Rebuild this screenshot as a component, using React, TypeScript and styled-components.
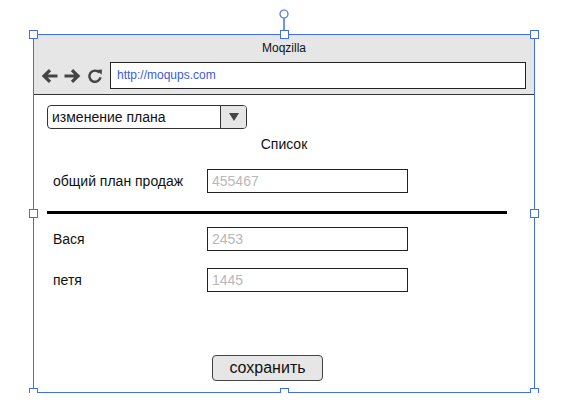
import React from 'react';
import styled, { createGlobalStyle } from 'styled-components';

const GlobalStyle = createGlobalStyle`
  body {
    margin: 0;
    background: #fff;
    font-family: 'Liberation Sans', Arial, sans-serif;
    color: #111;
  }
`;

const Stage = styled.div`
  padding: 34px 0 0 33px;
`;

const Frame = styled.div`
  position: relative;
  box-sizing: border-box;
  width: 502px;
  height: 359px;
  border: 1px solid #4170e6;
  display: flex;
  flex-direction: column;
`;

const Handle = styled.div<{ $x: 'l' | 'c' | 'r'; $y: 't' | 'm' | 'b' }>`
  position: absolute;
  box-sizing: border-box;
  width: 9px;
  height: 9px;
  background: #fff;
  border: 1px solid #4170e6;
  ${(p) => (p.$x === 'l' ? 'left: -5px;' : p.$x === 'r' ? 'right: -5px;' : 'left: 246px;')}
  ${(p) => (p.$y === 't' ? 'top: -5px;' : p.$y === 'b' ? 'bottom: -5px;' : 'top: 174px;')}
`;

const Rotator = styled.svg`
  position: absolute;
  left: 244px;
  top: -26px;
`;

const Header = styled.div`
  background: #e6e6e6;
  border-bottom: 1px solid #333;
  padding-bottom: 5px;
`;

const Title = styled.div`
  height: 27px;
  line-height: 27px;
  text-align: center;
  font-size: 12px;
  color: #111;
`;

const Toolbar = styled.div`
  display: flex;
  align-items: center;
  padding-left: 7px;
  height: 27px;
`;

const NavIcon = styled.svg`
  display: block;
  margin-right: 6px;
  flex: none;
`;

const UrlBox = styled.div`
  box-sizing: border-box;
  margin-left: 1px;
  width: 416px;
  height: 27px;
  background: #fff;
  border: 1px solid #222;
  font-size: 12px;
  line-height: 25px;
  padding-left: 6px;
  color: #3b5bdb;
`;

const Content = styled.div`
  flex: 1;
  display: flex;
  flex-direction: column;
  padding: 10px 13px 11px;
`;

const Select = styled.div`
  box-sizing: border-box;
  width: 200px;
  height: 24px;
  border: 1px solid #333;
  border-radius: 4px;
  display: flex;
  overflow: hidden;
  font-size: 14px;
`;

const SelectText = styled.div`
  flex: 1;
  line-height: 22px;
  padding-left: 4px;
`;

const SelectArrow = styled.div`
  width: 25px;
  background: #e6e6e6;
  border-left: 1px solid #333;
  display: flex;
  align-items: center;
  justify-content: center;
  &::after {
    content: '';
    border-left: 5px solid transparent;
    border-right: 5px solid transparent;
    border-top: 8px solid #444;
  }
`;

const Caption = styled.div`
  margin-top: 7px;
  text-align: center;
  font-size: 14px;
  line-height: 17px;
`;

const Row = styled.div<{ $gap: number }>`
  display: grid;
  grid-template-columns: 160px 201px;
  align-items: center;
  margin-top: ${(p) => p.$gap}px;
`;

const Label = styled.div`
  padding-left: 6px;
  font-size: 14px;
`;

const Field = styled.div`
  box-sizing: border-box;
  height: 24px;
  border: 1px solid #222;
  font-size: 14px;
  line-height: 22px;
  padding-left: 4px;
  color: #b8b8b8;
`;

const Divider = styled.div`
  width: 460px;
  height: 3px;
  background: #000;
  margin-top: 18px;
`;

const Footer = styled.div`
  margin-top: auto;
  display: flex;
  padding-left: 165px;
`;

const Button = styled.div`
  box-sizing: border-box;
  width: 111px;
  height: 26px;
  border: 1px solid #444;
  border-radius: 4px;
  background: #e6e6e6;
  font-size: 16px;
  line-height: 24px;
  text-align: center;
`;

const rows = [
  { label: 'Вася', value: '2453', gap: 13 },
  { label: 'петя', value: '1445', gap: 17 },
];

const App = () => (
  <>
    <GlobalStyle />
    <Stage>
      <Frame>
        <Header>
          <Title>Moqzilla</Title>
          <Toolbar>
            <NavIcon width="17" height="16" viewBox="0 0 17 16">
              <path d="M16.5 8H3.5M9 2.2L3 8l6 5.8" fill="none" stroke="#444" strokeWidth="3.2" />
            </NavIcon>
            <NavIcon width="17" height="16" viewBox="0 0 17 16">
              <path d="M0.5 8h13M8 2.2l6 5.8-6 5.8" fill="none" stroke="#444" strokeWidth="3.2" />
            </NavIcon>
            <NavIcon width="16" height="16" viewBox="0 0 16 16">
              <path d="M12.3 4.6A5.6 5.6 0 1 0 13.5 9.3" fill="none" stroke="#444" strokeWidth="2.4" />
              <path d="M9.6 2L15 1.4 14.6 6.8z" fill="#444" />
            </NavIcon>
            <UrlBox>http://moqups.com</UrlBox>
          </Toolbar>
        </Header>
        <Content>
          <Select>
            <SelectText>изменение плана</SelectText>
            <SelectArrow />
          </Select>
          <Caption>Список</Caption>
          <Row $gap={16}>
            <Label>общий план продаж</Label>
            <Field>455467</Field>
          </Row>
          <Divider />
          {rows.map((r) => (
            <Row key={r.label} $gap={r.gap}>
              <Label>{r.label}</Label>
              <Field>{r.value}</Field>
            </Row>
          ))}
          <Footer>
            <Button>сохранить</Button>
          </Footer>
        </Content>
        <Handle $x="l" $y="t" />
        <Handle $x="c" $y="t" />
        <Handle $x="r" $y="t" />
        <Handle $x="l" $y="m" />
        <Handle $x="r" $y="m" />
        <Handle $x="l" $y="b" />
        <Handle $x="c" $y="b" />
        <Handle $x="r" $y="b" />
        <Rotator width="12" height="22" viewBox="0 0 12 22">
          <circle cx="6" cy="5" r="4" fill="#fff" stroke="#4170e6" strokeWidth="1.2" />
          <line x1="6" y1="9" x2="6" y2="22" stroke="#4170e6" strokeWidth="1.5" />
        </Rotator>
      </Frame>
    </Stage>
  </>
);

export default App;
